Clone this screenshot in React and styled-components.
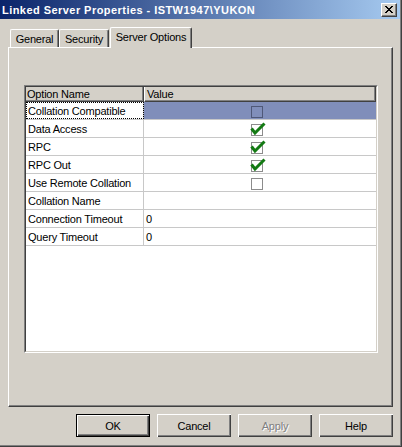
import styled, { createGlobalStyle } from "styled-components";

const Global = createGlobalStyle`
  body {
    margin: 0;
    background: #d4d0c8;
    font-family: "Liberation Sans", Arial, sans-serif;
    font-size: 11px;
    color: #000;
  }
`;

const Window = styled.div`
  width: 402px;
  height: 447px;
  box-sizing: border-box;
  background: #d4d0c8;
  display: flex;
  flex-direction: column;
  border-right: 1px solid #404040;
  border-bottom: 1px solid #404040;
  box-shadow: inset -1px -1px 0 #808080;
  overflow: hidden;
`;

const TitleBar = styled.div`
  height: 19px;
  flex: none;
  margin-right: 1px;
  padding: 0 3px 0 2px;
  display: flex;
  align-items: center;
  justify-content: space-between;
  background: linear-gradient(to right, #0a246a, #a6caf0);
  color: #fff;
  font-weight: bold;
  font-size: 11px;
  letter-spacing: 0.45px;
`;

const CloseButton = styled.div`
  width: 16px;
  height: 14px;
  box-sizing: border-box;
  background: #d4d0c8;
  border-top: 1px solid #fff;
  border-left: 1px solid #fff;
  border-right: 1px solid #404040;
  border-bottom: 1px solid #404040;
  box-shadow: inset -1px -1px 0 #808080;
  display: flex;
  align-items: center;
  justify-content: center;
`;

const Body = styled.div`
  flex: 1;
  padding: 8px 8px 0 8px;
  display: flex;
  flex-direction: column;
  letter-spacing: -0.2px;
`;

const TabRow = styled.div`
  height: 20px;
  flex: none;
  padding-left: 2px;
  display: flex;
  align-items: flex-end;
  position: relative;
  z-index: 1;
`;

const Tab = styled.div`
  width: ${(p) => p.$w}px;
  height: ${(p) => (p.$active ? "21px" : "18px")};
  margin-bottom: ${(p) => (p.$active ? "-1px" : "0")};
  margin-left: ${(p) => (p.$active ? "1px" : "0")};
  box-sizing: border-box;
  display: flex;
  justify-content: center;
  align-items: ${(p) => (p.$active ? "flex-start" : "center")};
  padding-top: ${(p) => (p.$active ? "3px" : "1px")};
  background: #d4d0c8;
  border-top: 1px solid #fff;
  border-left: 1px solid #fff;
  border-right: 1px solid #404040;
  box-shadow: inset -1px 0 0 #808080;
  border-radius: 2px 2px 0 0;
`;

const Panel = styled.div`
  height: 360px;
  flex: none;
  box-sizing: border-box;
  border-top: 1px solid #fff;
  border-left: 1px solid #fff;
  border-right: 1px solid #404040;
  border-bottom: 1px solid #404040;
  box-shadow: inset -1px -1px 0 #808080;
  padding: 37px 14px 0 15px;
`;

const Grid = styled.div`
  height: 268px;
  box-sizing: border-box;
  border-top: 1px solid #808080;
  border-left: 1px solid #808080;
  border-right: 1px solid #fff;
  border-bottom: 1px solid #fff;
`;

const GridInner = styled.div`
  height: 100%;
  box-sizing: border-box;
  border-top: 1px solid #404040;
  border-left: 1px solid #404040;
  border-right: 1px solid #d4d0c8;
  border-bottom: 1px solid #d4d0c8;
  background: #fff;
`;

const HeaderRow = styled.div`
  display: grid;
  grid-template-columns: 118px 1fr;
  height: 15px;
  background: #d4d0c8;
`;

const HeaderCell = styled.div`
  box-sizing: border-box;
  padding-left: ${(p) => (p.$first ? "1px" : "2px")};
  display: flex;
  align-items: center;
  border-left: ${(p) => (p.$first ? "0" : "1px solid #fff")};
  border-right: 1px solid #404040;
  border-bottom: 1px solid #404040;
  box-shadow: inset -1px -1px 0 #808080;
`;

const Row = styled.div`
  display: grid;
  grid-template-columns: 118px 1fr;
  height: 18px;
  border-bottom: 1px solid #c8c8c8;
  box-sizing: border-box;
`;

const NameCell = styled.div`
  box-sizing: border-box;
  padding-left: 2px;
  display: flex;
  align-items: center;
  border-right: 1px solid #c8c8c8;
  outline: ${(p) => (p.$focus ? "1px dotted #000" : "none")};
  outline-offset: -1px;
`;

const ValueCell = styled.div`
  box-sizing: border-box;
  padding-left: 2px;
  display: flex;
  align-items: center;
  background: ${(p) => (p.$selected ? "#808eba" : "#fff")};
`;

const CheckSlot = styled.div`
  margin-left: 104px;
  width: 16px;
  height: 16px;
  display: flex;
`;

const ButtonRow = styled.div`
  display: flex;
  justify-content: flex-end;
  gap: 7px;
  margin-top: 7px;
`;

const Button = styled.div`
  width: 74px;
  height: 23px;
  box-sizing: border-box;
  display: flex;
  align-items: center;
  justify-content: center;
  background: #d4d0c8;
  border: ${(p) => (p.$default ? "1px solid #000" : "0")};
  box-shadow: inset 1px 1px 0 #fff, inset -1px -1px 0 #404040,
    inset -2px -2px 0 #808080;
  color: ${(p) => (p.$disabled ? "#808080" : "#000")};
  text-shadow: ${(p) => (p.$disabled ? "1px 1px 0 #fff" : "none")};
`;

const Check = ({ checked, onSelected }) => (
  <CheckSlot>
    <svg width="16" height="16" viewBox="0 0 16 16">
      <rect
        x="1.5"
        y="3.5"
        width="11"
        height="11"
        fill="none"
        stroke={onSelected ? "#4f5878" : "#8c8c8c"}
      />
      {checked && (
        <path
          d="M1.5 7.5 L5 12 L14.5 2.5"
          fill="none"
          stroke="#137a13"
          strokeWidth="3"
          strokeLinejoin="miter"
        />
      )}
    </svg>
  </CheckSlot>
);

const rows = [
  { name: "Collation Compatible", check: false, selected: true },
  { name: "Data Access", check: true },
  { name: "RPC", check: true },
  { name: "RPC Out", check: true },
  { name: "Use Remote Collation", check: false },
  { name: "Collation Name", value: "" },
  { name: "Connection Timeout", value: "0" },
  { name: "Query Timeout", value: "0" },
];

export default function App() {
  return (
    <>
      <Global />
      <Window>
        <TitleBar>
          <span>Linked Server Properties - ISTW1947\YUKON</span>
          <CloseButton>
            <svg width="8" height="7" viewBox="0 0 8 7">
              <path d="M0 0 L7 7 M1 0 L8 7 M7 0 L0 7 M8 0 L1 7" stroke="#000" strokeWidth="1" />
            </svg>
          </CloseButton>
        </TitleBar>
        <Body>
          <TabRow>
            <Tab $w={49}>General</Tab>
            <Tab $w={50}>Security</Tab>
            <Tab $w={82} $active>Server Options</Tab>
          </TabRow>
          <Panel>
            <Grid>
              <GridInner>
                <HeaderRow>
                  <HeaderCell $first>Option Name</HeaderCell>
                  <HeaderCell>Value</HeaderCell>
                </HeaderRow>
                {rows.map((r) => (
                  <Row key={r.name}>
                    <NameCell $focus={r.selected}>{r.name}</NameCell>
                    <ValueCell $selected={r.selected}>
                      {"check" in r ? (
                        <Check checked={r.check} onSelected={r.selected} />
                      ) : (
                        r.value
                      )}
                    </ValueCell>
                  </Row>
                ))}
              </GridInner>
            </Grid>
          </Panel>
          <ButtonRow>
            <Button $default>OK</Button>
            <Button>Cancel</Button>
            <Button $disabled>Apply</Button>
            <Button>Help</Button>
          </ButtonRow>
        </Body>
      </Window>
    </>
  );
}
